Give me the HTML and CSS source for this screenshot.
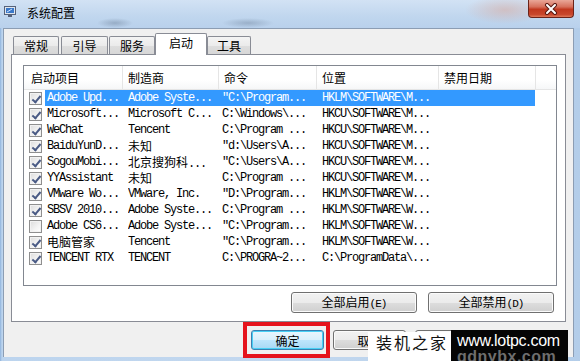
FILE: index.html
```html
<!DOCTYPE html>
<html lang="zh-CN">
<head>
  <meta charset="UTF-8">
  <title>系统配置</title>
  <link rel="stylesheet" href="styles.css">
</head>
<body>

  <div class="window">
    <div class="titlebar">
      <svg class="app-icon" width="12" height="11" viewBox="0 0 12 11">
        <rect x="0.5" y="0.5" width="11" height="8" fill="#dfe6ee" stroke="#56627a"/>
        <rect x="2" y="2" width="8" height="5" fill="#3a78c8"/>
        <path d="M3 6 L8 3" stroke="#cfe3ff" stroke-width="1"/>
        <rect x="4" y="9" width="4" height="2" fill="#56627a"/>
      </svg>
      <span class="title">系统配置</span>
      <div class="close">
        <svg width="14" height="12" viewBox="0 0 14 12">
          <path d="M3 2 L11 10 M11 2 L3 10" stroke="#5a1a12" stroke-width="4" stroke-linecap="round"/>
          <path d="M3 2 L11 10 M11 2 L3 10" stroke="#ffffff" stroke-width="2" stroke-linecap="round"/>
        </svg>
      </div>
    </div>

    <div class="client">
      <div class="tabs">
        <div class="tab t1">常规</div>
        <div class="tab t2">引导</div>
        <div class="tab t3">服务</div>
        <div class="tab t4 active">启动</div>
        <div class="tab t5">工具</div>
      </div>

      <div class="panel">
        <div class="list">
          <div class="list-head">
            <div class="hcol h1">启动项目</div>
            <div class="hcol h2">制造商</div>
            <div class="hcol h3">命令</div>
            <div class="hcol h4">位置</div>
            <div class="hcol h5">禁用日期</div>
            <div class="hcol h6"></div>
          </div>

          <div class="row selected">
            <span class="cb on"></span>
            <span class="cells">
              <span class="c1">Adobe Upd...</span>
              <span class="c2">Adobe Syste...</span>
              <span class="c3">"C:\Program...</span>
              <span class="c4">HKLM\SOFTWARE\M...</span>
            </span>
          </div>
          <div class="row">
            <span class="cb on"></span>
            <span class="cells">
              <span class="c1">Microsoft...</span>
              <span class="c2">Microsoft C...</span>
              <span class="c3">C:\Windows\...</span>
              <span class="c4">HKCU\SOFTWARE\M...</span>
            </span>
          </div>
          <div class="row">
            <span class="cb on"></span>
            <span class="cells">
              <span class="c1">WeChat</span>
              <span class="c2">Tencent</span>
              <span class="c3">C:\Program ...</span>
              <span class="c4">HKCU\SOFTWARE\M...</span>
            </span>
          </div>
          <div class="row">
            <span class="cb on"></span>
            <span class="cells">
              <span class="c1">BaiduYunD...</span>
              <span class="c2"><span class="cjk">未知</span></span>
              <span class="c3">"d:\Users\A...</span>
              <span class="c4">HKCU\SOFTWARE\M...</span>
            </span>
          </div>
          <div class="row">
            <span class="cb on"></span>
            <span class="cells">
              <span class="c1">SogouMobi...</span>
              <span class="c2"><span class="cjk">北京搜狗科</span>...</span>
              <span class="c3">"C:\Users\A...</span>
              <span class="c4">HKCU\SOFTWARE\M...</span>
            </span>
          </div>
          <div class="row">
            <span class="cb on"></span>
            <span class="cells">
              <span class="c1">YYAssistant</span>
              <span class="c2"><span class="cjk">未知</span></span>
              <span class="c3">C:\Program ...</span>
              <span class="c4">HKCU\SOFTWARE\M...</span>
            </span>
          </div>
          <div class="row">
            <span class="cb on"></span>
            <span class="cells">
              <span class="c1">VMware Wo...</span>
              <span class="c2">VMware, Inc.</span>
              <span class="c3">"D:\Program...</span>
              <span class="c4">HKLM\SOFTWARE\W...</span>
            </span>
          </div>
          <div class="row">
            <span class="cb on"></span>
            <span class="cells">
              <span class="c1">SBSV 2010...</span>
              <span class="c2">Adobe Syste...</span>
              <span class="c3">C:\Program ...</span>
              <span class="c4">HKLM\SOFTWARE\W...</span>
            </span>
          </div>
          <div class="row">
            <span class="cb"></span>
            <span class="cells">
              <span class="c1">Adobe CS6...</span>
              <span class="c2">Adobe Syste...</span>
              <span class="c3">"C:\Program...</span>
              <span class="c4">HKLM\SOFTWARE\W...</span>
            </span>
          </div>
          <div class="row">
            <span class="cb on"></span>
            <span class="cells">
              <span class="c1"><span class="cjk">电脑管家</span></span>
              <span class="c2">Tencent</span>
              <span class="c3">"C:\Program...</span>
              <span class="c4">HKLM\SOFTWARE\W...</span>
            </span>
          </div>
          <div class="row">
            <span class="cb on"></span>
            <span class="cells">
              <span class="c1">TENCENT RTX</span>
              <span class="c2">TENCENT</span>
              <span class="c3">C:\PROGRA~2...</span>
              <span class="c4">C:\ProgramData\...</span>
            </span>
          </div>
        </div>

        <div class="panel-buttons">
          <button class="btn wide">全部启用<span class="key">(E)</span></button>
          <button class="btn wide">全部禁用<span class="key">(D)</span></button>
        </div>
      </div>

      <div class="dialog-buttons">
        <button class="btn small default">确定</button>
        <button class="btn small">取消</button>
        <button class="btn small">应用<span class="key">(A)</span></button>
      </div>
    </div>
  </div>

  <!-- annotations added on top of the screenshot -->
  <div class="red-mark"></div>
  <div class="wm-cn">装机之家</div>
  <div class="wm-en">
    <span class="wm-url">www.lotpc.com</span>
    <span class="wm-under">gdnybx.com</span>
  </div>

</body>
</html>
```

FILE: styles.css
```css
* {
  box-sizing: border-box;
}

body {
  margin: 0;
  width: 580px;
  height: 361px;
  overflow: hidden;
  position: relative;
  font-family: "Noto Sans CJK SC", sans-serif;
  font-size: 12px;
  color: #000;
  background: linear-gradient(90deg, #8fb3dc 0, #bcd4ee 2px, #c3d8ef 50%, #b3cde9 100%);
}

.window {
  height: 361px;
  display: flex;
  flex-direction: column;
}

/* title bar */
.titlebar {
  height: 28px;
  flex: none;
  display: flex;
  align-items: flex-start;
  background:
    radial-gradient(ellipse 18px 5px at 115px 23px, rgba(120, 140, 165, 0.55), transparent),
    radial-gradient(ellipse 26px 5px at 248px 23px, rgba(120, 140, 165, 0.5), transparent),
    radial-gradient(ellipse 40px 14px at 505px 10px, rgba(215, 170, 160, 0.55), transparent),
    linear-gradient(180deg, #d2e2f4 0, #c0d6ee 60%, #b9d1ec 100%);
}

.app-icon {
  margin: 6px 0 0 4px;
}

.title {
  margin-left: 11px;
  padding-top: 6px;
  line-height: 14px;
  font-size: 12px;
}

.close {
  margin-left: auto;
  margin-right: 6px;
  width: 46px;
  height: 18px;
  display: flex;
  align-items: center;
  justify-content: center;
  border: 1px solid #6b2319;
  border-top: none;
  border-radius: 0 0 4px 4px;
  background: linear-gradient(180deg, #e9a798 0, #d6705c 40%, #c1381f 55%, #c8472c 85%, #e0795a 100%);
}

/* client area */
.client {
  margin: 0 6px 0 3px;
  height: 329px;
  border: 1px solid #8c9db3;
  border-bottom: none;
  background: #f0f0f0;
}

.tabs {
  display: flex;
  align-items: flex-end;
  height: 22px;
  margin: 4px 0 -1px 9px;
  position: relative;
  z-index: 1;
}

.tab {
  height: 18px;
  margin-bottom: 1px;
  display: flex;
  align-items: center;
  justify-content: center;
  line-height: 14px;
  border: 1px solid #898c95;
  border-bottom: none;
  border-radius: 2px 2px 0 0;
  background: linear-gradient(180deg, #f4f4f4 0, #ebebeb 50%, #dedede 51%, #d7d7d7 100%);
}

.t1 { width: 46px; margin-right: 2px; }
.t2 { width: 47px; margin-right: 1px; }
.t3 { width: 46px; }
.t4 { width: 52px; }
.t5 { width: 44px; }

.tab.active {
  height: 22px;
  margin-bottom: 0;
  padding-bottom: 3px;
  background: #fff;
}

.panel {
  margin: 0 7px;
  height: 268px;
  border: 1px solid #898c95;
  background: #fff;
}

/* list view */
.list {
  margin: 10px 0 0 11px;
  width: 534px;
  height: 221px;
  border: 1px solid #828790;
  overflow: hidden;
}

.list-head {
  display: flex;
  height: 24px;
  border-bottom: 1px solid #e5e5e5;
  background: linear-gradient(180deg, #ffffff 0, #ffffff 60%, #f6f7f8 100%);
}

.hcol {
  height: 23px;
  line-height: 23px;
  padding-left: 5px;
  border-right: 1px solid #e5e5e5;
  font-size: 12px;
  white-space: nowrap;
}

.h1 { width: 99px; padding-left: 7px; }
.h2 { width: 96px; }
.h3 { width: 98px; }
.h4 { width: 122px; }
.h5 { width: 97px; }
.h6 { flex: 1; border-right: none; }

.row {
  display: flex;
  align-items: center;
  height: 16px;
  font-family: "Liberation Mono", "Noto Sans CJK SC", monospace;
  font-size: 12px;
  letter-spacing: -1.2px;
}

.cb {
  width: 13px;
  height: 13px;
  margin: 0 3px 0 5px;
  border: 1px solid #8f8f8f;
  background: linear-gradient(135deg, #dcdcdc 0, #f4f4f4 60%, #ffffff 100%);
  box-shadow: inset 0 0 0 1px #f2f2f2;
  position: relative;
  flex: none;
}

.cb.on::after {
  content: "";
  position: absolute;
  left: 4px;
  top: 1px;
  width: 3px;
  height: 7px;
  border-right: 2px solid #4a5b85;
  border-bottom: 2px solid #4a5b85;
  transform: rotate(40deg);
}

.cells {
  display: flex;
  width: 490px;
  height: 16px;
  line-height: 16px;
  white-space: nowrap;
}

.cells > span {
  overflow: hidden;
}

.c1 { width: 83px; padding-left: 2px; }
.c2 { width: 94px; }
.c3 { width: 100px; }
.c4 { flex: 1; }

.cjk {
  font-family: "Noto Sans CJK SC", sans-serif;
  letter-spacing: 0;
}

.row.selected .cells {
  background: #3399ff;
  color: #fff;
}

/* buttons */
.btn {
  height: 21px;
  padding: 0;
  border: 1px solid #707070;
  border-radius: 3px;
  background: linear-gradient(180deg, #f2f2f2 0, #ebebeb 50%, #dddddd 51%, #cfcfcf 100%);
  box-shadow: inset 0 0 0 1px #fbfbfb;
  font-family: "Noto Sans CJK SC", sans-serif;
  font-size: 12px;
  line-height: 17px;
  color: #000;
}

.key {
  font-family: "Liberation Mono", monospace;
  font-size: 11px;
  letter-spacing: -1px;
}

.panel-buttons {
  display: flex;
  justify-content: flex-end;
  gap: 11px;
  margin-top: 6px;
  padding-right: 11px;
}

.wide {
  width: 126px;
}

.dialog-buttons {
  display: flex;
  gap: 9px;
  margin-top: 8px;
  padding-left: 247px;
}

.small {
  width: 73px;
  height: 20px;
  flex: none;
}

.btn.default {
  border-color: #3c7fb1;
  background: linear-gradient(180deg, #eaf6fd 0, #d9f0fc 50%, #bee6fd 51%, #a7d9f5 100%);
  box-shadow: inset 0 0 0 1px #48d0f5;
}

/* overlays drawn on the picture */
.red-mark {
  position: absolute;
  left: 243px;
  top: 322px;
  width: 87px;
  height: 36px;
  border: 4px solid #e5131c;
}

.wm-cn {
  position: absolute;
  left: 368px;
  top: 332px;
  width: 83px;
  height: 29px;
  padding-left: 8px;
  background: #fff;
  font-size: 16px;
  letter-spacing: 2px;
  line-height: 18px;
  padding-top: 1px;
  color: #111;
}

.wm-en {
  position: absolute;
  left: 451px;
  top: 330px;
  width: 117px;
  height: 31px;
  background: #050505;
  overflow: hidden;
  display: flex;
  flex-direction: column;
  padding-left: 6px;
}

.wm-url {
  font-family: "Liberation Sans", sans-serif;
  font-size: 16px;
  line-height: 17px;
  padding-top: 2px;
  color: #fff;
  letter-spacing: -0.3px;
}

.wm-under {
  font-family: "Liberation Sans", sans-serif;
  font-size: 16px;
  font-weight: bold;
  line-height: 16px;
  color: #6e6e6e;
  letter-spacing: 0.5px;
}
```
